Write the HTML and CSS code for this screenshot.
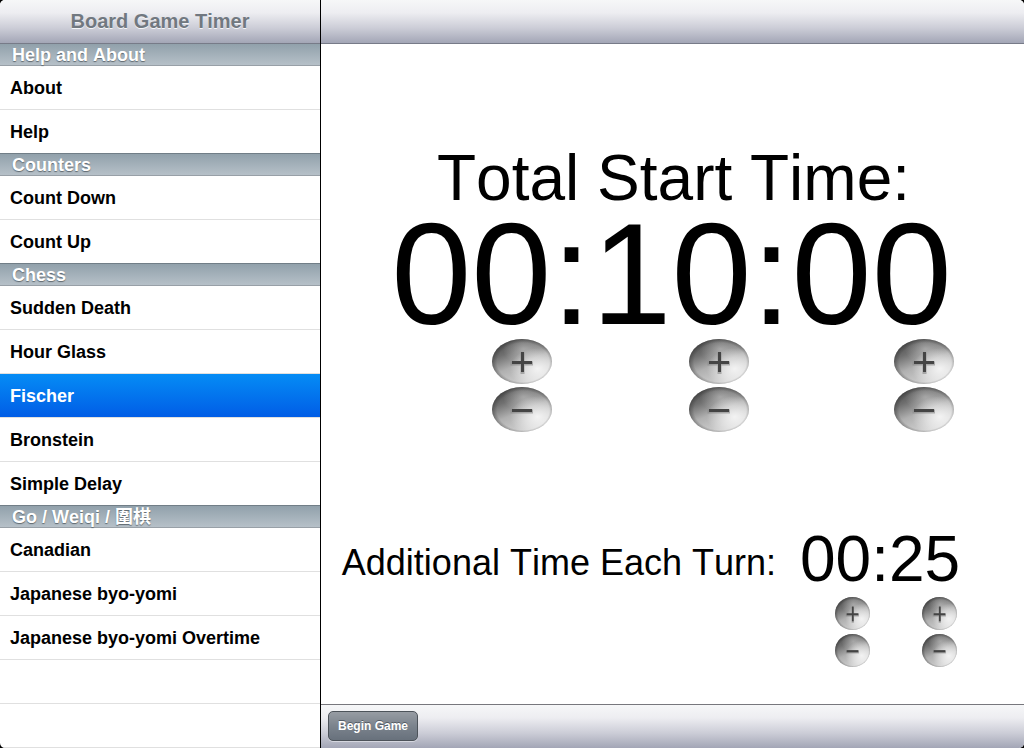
FILE: index.html
```html
<!DOCTYPE html>
<html lang="en">
<head>
<meta charset="utf-8">
<title>Board Game Timer</title>
<link rel="stylesheet" href="styles.css">
</head>
<body>
<svg class="defs" width="0" height="0" aria-hidden="true">
  <defs>
    <linearGradient id="metal" x1="0.1" y1="0.05" x2="0.6" y2="0.95">
      <stop offset="0" stop-color="#484848"/>
      <stop offset="0.3" stop-color="#707070"/>
      <stop offset="0.6" stop-color="#b0b0b0"/>
      <stop offset="1" stop-color="#d2d2d2"/>
    </linearGradient>
    <radialGradient id="shine" cx="0.76" cy="0.66" r="0.46">
      <stop offset="0" stop-color="#fff" stop-opacity="0.8"/>
      <stop offset="0.5" stop-color="#fff" stop-opacity="0.45"/>
      <stop offset="1" stop-color="#fff" stop-opacity="0"/>
    </radialGradient>
    <radialGradient id="glint" cx="0.52" cy="0.22" r="0.34">
      <stop offset="0" stop-color="#ddd" stop-opacity="0.45"/>
      <stop offset="1" stop-color="#ddd" stop-opacity="0"/>
    </radialGradient>
    <radialGradient id="rim" cx="0.52" cy="0.52" r="0.53">
      <stop offset="0.82" stop-color="#333" stop-opacity="0"/>
      <stop offset="1" stop-color="#333" stop-opacity="0.5"/>
    </radialGradient>
    <g id="disc">
      <ellipse cx="30" cy="22.5" rx="30" ry="22.5" fill="url(#metal)"/>
      <ellipse cx="30" cy="22.5" rx="30" ry="22.5" fill="url(#glint)"/>
      <ellipse cx="30" cy="22.5" rx="30" ry="22.5" fill="url(#shine)"/>
      <ellipse cx="30" cy="22.5" rx="30" ry="22.5" fill="url(#rim)"/>
    </g>
    <symbol id="plus" viewBox="0 0 60 45" preserveAspectRatio="none">
      <use href="#disc"/>
      <path d="M18.500 22.500h10v-9h4v9h8.500v4h-8.500v8.500h-4v-8.500h-10z" fill="#8c8c8c" fill-opacity="0.65"/>
      <path d="M20 22h9v-9h3v9h8v3h-8v8h-3v-8h-9z" fill="#444"/>
    </symbol>
    <symbol id="minus" viewBox="0 0 60 45" preserveAspectRatio="none">
      <use href="#disc"/>
      <path d="M18.500 22.500h22.500v4h-22.500z" fill="#8c8c8c" fill-opacity="0.65"/>
      <path d="M20 22h20v3h-20z" fill="#444"/>
    </symbol>
  </defs>
</svg>
<div class="app">
  <nav class="sidebar" aria-label="Timers">
    <header class="bar title-bar"><h1 class="app-title">Board Game Timer</h1></header>
    <h2 class="section-title">Help and About</h2>
    <ul class="menu">
      <li class="row"><a class="link" href="#about">About</a></li>
      <li class="row"><a class="link" href="#help">Help</a></li>
    </ul>
    <h2 class="section-title">Counters</h2>
    <ul class="menu">
      <li class="row"><a class="link" href="#count-down">Count Down</a></li>
      <li class="row"><a class="link" href="#count-up">Count Up</a></li>
    </ul>
    <h2 class="section-title">Chess</h2>
    <ul class="menu">
      <li class="row"><a class="link" href="#sudden-death">Sudden Death</a></li>
      <li class="row"><a class="link" href="#hour-glass">Hour Glass</a></li>
      <li class="row"><a class="link selected" href="#fischer" aria-current="page">Fischer</a></li>
      <li class="row"><a class="link" href="#bronstein">Bronstein</a></li>
      <li class="row"><a class="link" href="#simple-delay">Simple Delay</a></li>
    </ul>
    <h2 class="section-title">Go / Weiqi / <span lang="zh-Hant">圍棋</span></h2>
    <ul class="menu menu-last">
      <li class="row"><a class="link" href="#canadian">Canadian</a></li>
      <li class="row"><a class="link" href="#byo-yomi">Japanese byo-yomi</a></li>
      <li class="row"><a class="link" href="#byo-yomi-overtime">Japanese byo-yomi Overtime</a></li>
      <li class="row" aria-hidden="true"></li>
      <li class="row" aria-hidden="true"></li>
    </ul>
  </nav>
  <main class="detail">
    <div class="bar title-bar"></div>
    <div class="settings">
      <section class="total">
        <h2 class="total-label">Total Start Time:</h2>
        <div class="total-clock">00:10:00</div>
        <div class="total-steps">
          <button class="step" type="button" aria-label="Add an hour"><svg class="face"><use href="#plus"/></svg></button>
          <button class="step" type="button" aria-label="Add a minute"><svg class="face"><use href="#plus"/></svg></button>
          <button class="step" type="button" aria-label="Add a second"><svg class="face"><use href="#plus"/></svg></button>
          <button class="step" type="button" aria-label="Remove an hour"><svg class="face"><use href="#minus"/></svg></button>
          <button class="step" type="button" aria-label="Remove a minute"><svg class="face"><use href="#minus"/></svg></button>
          <button class="step" type="button" aria-label="Remove a second"><svg class="face"><use href="#minus"/></svg></button>
        </div>
      </section>
      <section class="extra">
        <h2 class="extra-label">Additional Time Each Turn:</h2>
        <div class="extra-time">
          <div class="extra-clock">00:25</div>
          <div class="extra-steps">
            <button class="step" type="button" aria-label="Add a minute per turn"><svg class="face"><use href="#plus"/></svg></button>
            <button class="step" type="button" aria-label="Add a second per turn"><svg class="face"><use href="#plus"/></svg></button>
            <button class="step" type="button" aria-label="Remove a minute per turn"><svg class="face"><use href="#minus"/></svg></button>
            <button class="step" type="button" aria-label="Remove a second per turn"><svg class="face"><use href="#minus"/></svg></button>
          </div>
        </div>
      </section>
    </div>
    <footer class="bar tool-bar"><button class="begin" type="button">Begin Game</button></footer>
  </main>
</div>
</body>
</html>
```

FILE: styles.css
```css
* { box-sizing: border-box; }
body {
  margin: 0;
  background: #000;
  color: #000;
  font-family: "Liberation Sans", "Noto Sans CJK TC", sans-serif;
  font-kerning: none;
}
h1, h2 { margin: 0; }
.defs { position: absolute; }
.app {
  display: grid;
  grid-template-columns: 321px 1fr;
  min-height: 100vh;
  border-radius: 5px;
  overflow: hidden;
  background: #fff;
}
.sidebar {
  display: flex;
  flex-direction: column;
  border-right: 1px solid #000;
}
.bar {
  display: flex;
  align-items: center;
  height: 44px;
  background: linear-gradient(#f6f7f8, #ededf1 30%, #cccdd7 65%, #a3a6b6);
}
.title-bar {
  justify-content: center;
  border-bottom: 1px solid #777b88;
}
.app-title {
  padding-bottom: 2px;
  font-size: 20px;
  line-height: 24px;
  color: #717880;
  text-shadow: 0 1px 0 #f4f5f8;
}
.section-title {
  height: 22px;
  padding-left: 12px;
  border-bottom: 1px solid #98a0a7;
  background: linear-gradient(#91a1ab, #b6c0c8);
  font-size: 18px;
  line-height: 22px;
  color: #fff;
  text-shadow: 0 1px 1px #5f686f;
}
.menu {
  margin: 0;
  padding: 0;
  list-style: none;
}
.row {
  height: 44px;
  border-bottom: 1px solid #e0e0e0;
}
.row:last-child { border-bottom-color: #717e87; }
.menu-last .row:last-child { border-bottom-color: #e0e0e0; }
.link {
  display: block;
  padding: 1px 0 0 10px;
  font-size: 18px;
  font-weight: bold;
  line-height: 42px;
  padding-top: 1px;
  color: #000;
  text-decoration: none;
}
.selected {
  background: linear-gradient(#058cf5, #015de6);
  color: #fff;
}
.detail {
  display: flex;
  flex-direction: column;
  min-width: 0;
}
.settings {
  flex: 1;
  display: flex;
  flex-direction: column;
  align-items: center;
  gap: 95px;
  padding: 101px 43px 32px 0;
}
.total {
  display: flex;
  flex-direction: column;
  align-items: center;
  padding-left: 41px;
}
.total-label {
  padding-left: 4px;
  font-size: 64px;
  font-weight: normal;
  line-height: 66px;
}
.total-clock {
  font-size: 144px;
  line-height: 128px;
}
.total-steps {
  display: grid;
  grid-template-columns: 197px 205px 60px;
  row-gap: 3px;
  padding-left: 102px;
  align-self: stretch;
}
.total-steps .step { width: 60px; height: 45px; }
.step {
  padding: 0;
  border: 0;
  border-radius: 50%;
  background: none;
}
.face {
  display: block;
  width: 100%;
  height: 100%;
}
.extra {
  display: flex;
  gap: 24px;
}
.extra-label {
  font-size: 36px;
  font-weight: normal;
  line-height: 72px;
}
.extra-clock {
  font-size: 64px;
  line-height: 64px;
}
.extra-steps {
  display: grid;
  grid-template-columns: 87px 35px;
  row-gap: 4px;
  padding: 6px 0 0 35px;
}
.extra-steps .step { width: 35px; height: 33px; }
.tool-bar {
  padding: 0 7px 2px;
  border-top: 1px solid #77777d;
}
.begin {
  height: 30px;
  padding: 0 9px;
  border: 1px solid #4d535a;
  border-radius: 5px;
  background: linear-gradient(#979ca3, #7b838d 50%, #68717c);
  box-shadow: 0 1px 0 #d5d7df;
  font: bold 12px/28px "Liberation Sans", sans-serif;
  color: #fff;
  text-shadow: 0 -1px 0 #555c65;
}
```
